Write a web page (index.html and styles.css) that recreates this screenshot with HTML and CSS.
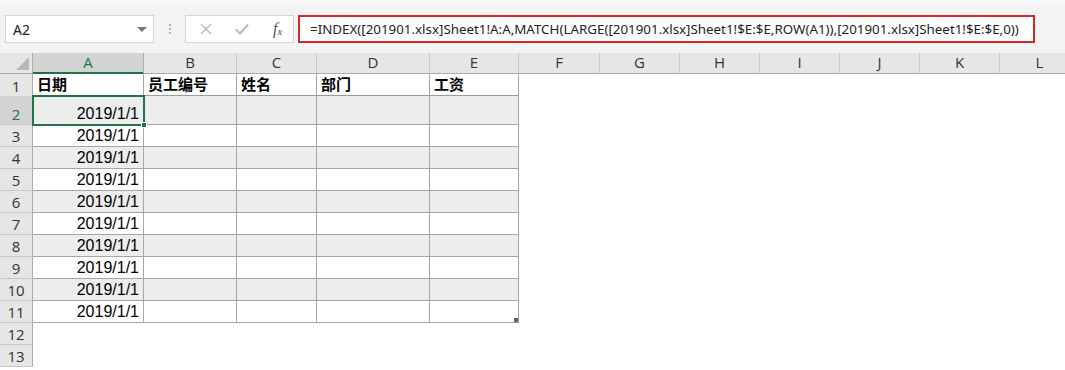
FILE: index.html
```html
<!DOCTYPE html>
<html lang="zh-CN">
<head>
    <meta charset="UTF-8">
    <title>Excel - 201901</title>
    <link rel="stylesheet" href="styles.css">
</head>
<body>
    <div class="toolbar">
        <div class="name-box">
            <span>A2</span>
            <span class="drop"></span>
        </div>
        <div class="grip"><i></i><i></i><i></i></div>
        <div class="fx-box">
            <svg class="ico" width="14" height="14" viewBox="0 0 14 14"><path d="M2 2 L12 12 M12 2 L2 12" stroke="#b9b9b9" stroke-width="1.3" fill="none"/></svg>
            <svg class="ico" width="16" height="14" viewBox="0 0 16 14"><path d="M2 7.5 L6 11.5 L14 2.5" stroke="#b9b9b9" stroke-width="2" fill="none"/></svg>
            <span class="fx">f<sub>x</sub></span>
        </div>
        <div class="formula">=INDEX([201901.xlsx]Sheet1!A:A,MATCH(LARGE([201901.xlsx]Sheet1!$E:$E,ROW(A1)),[201901.xlsx]Sheet1!$E:$E,0))</div>
    </div>

    <div class="sheet">
        <div class="row col-head">
            <div class="corner"><span class="tri"></span></div>
            <div class="ch active">A</div>
            <div class="ch">B</div>
            <div class="ch">C</div>
            <div class="ch">D</div>
            <div class="ch">E</div>
            <div class="ch">F</div>
            <div class="ch">G</div>
            <div class="ch">H</div>
            <div class="ch">I</div>
            <div class="ch">J</div>
            <div class="ch">K</div>
            <div class="ch">L</div>
        </div>

        <div class="row r-title">
            <div class="rh">1</div>
            <div class="c th">日期</div>
            <div class="c th">员工编号</div>
            <div class="c th">姓名</div>
            <div class="c th">部门</div>
            <div class="c th">工资</div>
        </div>
        <div class="row r-tall band">
            <div class="rh active">2</div>
            <div class="c num selected">2019/1/1<span class="sel-box"></span><span class="handle"></span></div>
            <div class="c"></div><div class="c"></div><div class="c"></div><div class="c"></div>
        </div>
        <div class="row">
            <div class="rh">3</div>
            <div class="c num">2019/1/1</div>
            <div class="c"></div><div class="c"></div><div class="c"></div><div class="c"></div>
        </div>
        <div class="row band">
            <div class="rh">4</div>
            <div class="c num">2019/1/1</div>
            <div class="c"></div><div class="c"></div><div class="c"></div><div class="c"></div>
        </div>
        <div class="row">
            <div class="rh">5</div>
            <div class="c num">2019/1/1</div>
            <div class="c"></div><div class="c"></div><div class="c"></div><div class="c"></div>
        </div>
        <div class="row band">
            <div class="rh">6</div>
            <div class="c num">2019/1/1</div>
            <div class="c"></div><div class="c"></div><div class="c"></div><div class="c"></div>
        </div>
        <div class="row">
            <div class="rh">7</div>
            <div class="c num">2019/1/1</div>
            <div class="c"></div><div class="c"></div><div class="c"></div><div class="c"></div>
        </div>
        <div class="row band">
            <div class="rh">8</div>
            <div class="c num">2019/1/1</div>
            <div class="c"></div><div class="c"></div><div class="c"></div><div class="c"></div>
        </div>
        <div class="row">
            <div class="rh">9</div>
            <div class="c num">2019/1/1</div>
            <div class="c"></div><div class="c"></div><div class="c"></div><div class="c"></div>
        </div>
        <div class="row band">
            <div class="rh">10</div>
            <div class="c num">2019/1/1</div>
            <div class="c"></div><div class="c"></div><div class="c"></div><div class="c"></div>
        </div>
        <div class="row">
            <div class="rh">11</div>
            <div class="c num">2019/1/1</div>
            <div class="c"></div><div class="c"></div><div class="c"></div>
            <div class="c last">
                <span class="resize"></span>
            </div>
        </div>
        <div class="row">
            <div class="rh">12</div>
        </div>
        <div class="row">
            <div class="rh">13</div>
        </div>
    </div>
</body>
</html>
```

FILE: styles.css
```css
* {
    box-sizing: border-box;
}

body {
    margin: 0;
    background: #fff;
    font-family: "Liberation Sans", "Noto Sans CJK SC", sans-serif;
    color: #000;
    overflow: hidden;
}

/* formula bar */
.toolbar {
    height: 53px;
    background: #f3f3f3;
    border-top: 4px solid #f9f9f9;
    padding: 11px 0 0 5px;
    display: flex;
    align-items: flex-start;
}

.name-box {
    width: 149px;
    height: 28px;
    background: #fff;
    border: 1px solid #d4d4d4;
    display: flex;
    align-items: center;
    justify-content: space-between;
    padding: 0 6px 0 7px;
    font-family: "Noto Sans", sans-serif;
    font-size: 14px;
    color: #222;
}

.drop {
    width: 0;
    height: 0;
    border-left: 5px solid transparent;
    border-right: 5px solid transparent;
    border-top: 5px solid #777;
}

.grip {
    width: 31px;
    height: 28px;
    display: flex;
    flex-direction: column;
    align-items: center;
    justify-content: center;
    gap: 2px;
}

.grip i {
    display: block;
    width: 2px;
    height: 2px;
    background: #b5b5b5;
}

.fx-box {
    width: 109px;
    height: 28px;
    background: #fff;
    border: 1px solid #d4d4d4;
    display: flex;
    align-items: center;
    padding-left: 13px;
    gap: 21px;
}

.fx {
    font-family: "Liberation Serif", serif;
    font-style: italic;
    font-size: 16px;
    color: #555;
    margin-left: 2px;
}

.fx sub {
    font-size: 11px;
    vertical-align: -1px;
}

.formula {
    margin-left: 4px;
    width: 737px;
    height: 28px;
    background: #fff;
    border: 2px solid #d6272b;
    padding-left: 10px;
    font-family: "Noto Sans", sans-serif;
    font-size: 13.35px;
    line-height: 24px;
    color: #222;
    white-space: nowrap;
    overflow: hidden;
}

/* grid */
.row {
    display: grid;
    grid-template-columns: 33px 111px 93px 80px 113px 89px 81px 80px 80px 80px 80px 80px 80px;
    height: 22px;
}

.r-title {
    height: 23px;
}

.r-tall {
    height: 29px;
}

.col-head {
    height: 20px;
    background: #e6e6e6;
}

.corner {
    background: #e6e6e6;
    border-right: 1px solid #ababab;
    border-bottom: 1px solid #ababab;
    position: relative;
}

.tri {
    position: absolute;
    right: 3px;
    bottom: 3px;
    width: 0;
    height: 0;
    border-left: 13px solid transparent;
    border-bottom: 13px solid #b8b8b8;
}

.ch {
    border-right: 1px solid #c8c8c8;
    border-bottom: 1px solid #ababab;
    text-align: center;
    font-family: "Open Sans", sans-serif;
    font-size: 15px;
    line-height: 19px;
    color: #333;
}

.ch.active {
    background: #d3d3d3;
    color: #217346;
    border-bottom: 2px solid #217346;
    border-right-color: #ababab;
}

.rh {
    background: #e6e6e6;
    border-right: 1px solid #ababab;
    border-bottom: 1px solid #c8c8c8;
    text-align: center;
    font-family: "Open Sans", sans-serif;
    font-size: 15px;
    color: #333;
    display: flex;
    align-items: flex-end;
    justify-content: center;
    padding-bottom: 0;
}

.rh.active {
    color: #217346;
    background: #d3d3d3;
}

.c {
    border-right: 1px solid #a6a6a6;
    border-bottom: 1px solid #a6a6a6;
    font-size: 16px;
    padding: 0 4px;
    display: flex;
    align-items: flex-end;
    padding-bottom: 1px;
    white-space: nowrap;
}

.th {
    font-weight: bold;
    font-size: 15px;
    border-bottom: 2px solid #9c9c9c;
}

.num {
    justify-content: flex-end;
    padding-right: 4px;
}

.band .c {
    background: #ededed;
}

.selected {
    position: relative;
}

.sel-box {
    position: absolute;
    left: -1px;
    top: -1px;
    right: -2px;
    bottom: -2px;
    border: 2px solid #217346;
}

.handle {
    position: absolute;
    right: -4px;
    bottom: -4px;
    width: 6px;
    height: 6px;
    background: #217346;
    border: 1px solid #fff;
}

.last {
    position: relative;
}

.resize {
    position: absolute;
    right: 0;
    bottom: 0;
    width: 4px;
    height: 4px;
    background: #5a5a99;
}
```
